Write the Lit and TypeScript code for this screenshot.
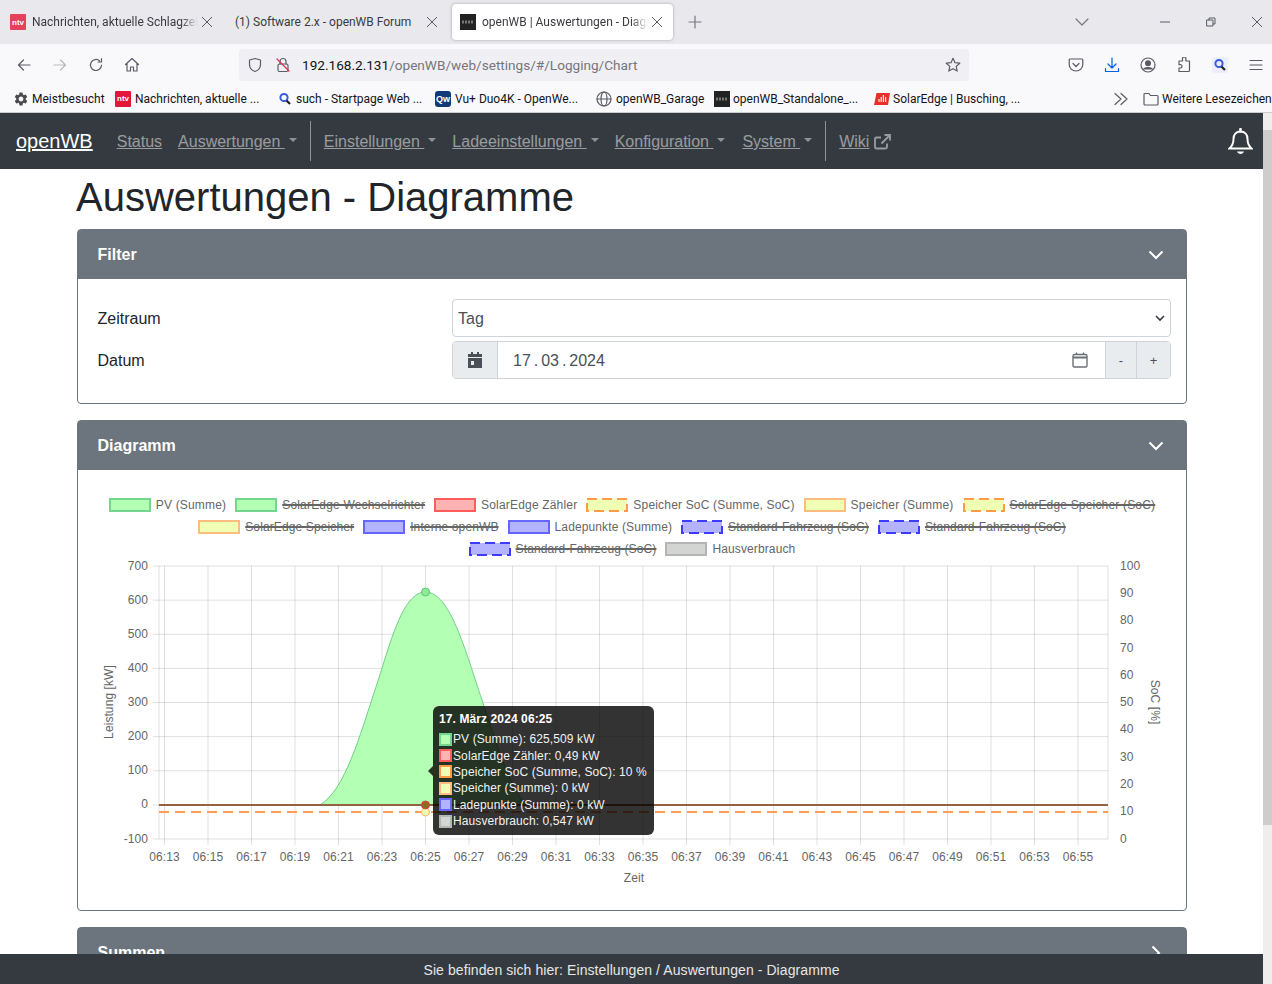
import { LitElement, html, svg, css } from 'lit';
import { customElement } from 'lit/decorators.js';

const GEAR =
  'M19.14 12.94c.04-.3.06-.61.06-.94 0-.32-.02-.64-.07-.94l2.03-1.58c.18-.14.23-.41.12-.61l-1.92-3.32c-.12-.22-.37-.29-.59-.22l-2.39.96c-.5-.38-1.03-.7-1.62-.94l-.36-2.54c-.04-.24-.24-.41-.48-.41h-3.84c-.24 0-.43.17-.47.41l-.36 2.54c-.59.24-1.13.57-1.62.94l-2.39-.96c-.22-.08-.47 0-.59.22L2.74 8.87c-.12.21-.08.47.12.61l2.03 1.58c-.05.3-.09.63-.09.94s.02.64.07.94l-2.03 1.58c-.18.14-.23.41-.12.61l1.92 3.32c.12.22.37.29.59.22l2.39-.96c.5.38 1.03.7 1.62.94l.36 2.54c.05.24.24.41.48.41h3.84c.24 0 .44-.17.47-.41l.36-2.54c.59-.24 1.13-.56 1.62-.94l2.39.96c.22.08.47 0 .59-.22l1.92-3.32c.12-.22.07-.47-.12-.61l-2.01-1.58zM12 15.6c-1.98 0-3.6-1.62-3.6-3.6s1.62-3.6 3.6-3.6 3.6 1.62 3.6 3.6-1.62 3.6-3.6 3.6z';

// toolbar icons, all on a 16 box with a thin stroke
const line = (d: string) => html`<svg class="ic" viewBox="0 0 16 16"><path d=${d} /></svg>`;

const ntv = (cls: string) => html`<span class="fav ${cls}">ntv</span>`;
const wbFav = html`<svg class="fav-svg" viewBox="0 0 16 16">
  <rect width="16" height="16" fill="#222" />
  <path d="M2 8h12" stroke="#777" stroke-width="3" stroke-dasharray="2 1" />
</svg>`;
const searchFav = html`<svg class="fav-svg" viewBox="0 0 16 16">
  <circle cx="7" cy="6.5" r="3.6" fill="none" stroke="#3b5bdb" stroke-width="2" />
  <path d="M9.5 9.5l3.5 3.5" stroke="#222" stroke-width="2.2" />
</svg>`;
const vuFav = html`<span class="fav vu">Qw</span>`;
const globeFav = html`<svg class="ic" viewBox="0 0 16 16">
  <circle cx="8" cy="8" r="7" />
  <ellipse cx="8" cy="8" rx="3" ry="7" />
  <path d="M1 8h14" />
</svg>`;
const solarFav = html`<svg class="fav-svg" viewBox="0 0 16 16">
  <path d="M2.5 2H16l-2 12H0z" fill="#e8302a" />
  <path d="M5 11V8M7.2 11V6M9.4 11V4M11.6 11V6" stroke="#fff" stroke-width="1.1" />
</svg>`;
const gearFav = html`<svg class="fav-svg" viewBox="0 0 24 24"><path d=${GEAR} fill="#4a4a4f" /></svg>`;

const BOOKMARKS = [
  { w: 102, icon: gearFav, text: 'Meistbesucht' },
  { w: 162, icon: ntv('ntv-strong'), text: 'Nachrichten, aktuelle ...' },
  { w: 158, icon: searchFav, text: 'such - Startpage Web ...' },
  { w: 161, icon: vuFav, text: 'Vu+ Duo4K - OpenWe...' },
  { w: 118, icon: globeFav, text: 'openWB_Garage' },
  { w: 160, icon: wbFav, text: 'openWB_Standalone_...' },
  { w: 160, icon: solarFav, text: 'SolarEdge | Busching, ...' },
];

@customElement('browser-chrome')
export class BrowserChrome extends LitElement {
  static override styles = css`
    :host {
      display: block;
      font-family: Roboto, 'Noto Sans', sans-serif;
      font-size: 12px;
      color: #15141a;
    }
    .ic {
      width: 16px;
      height: 16px;
      flex: none;
      fill: none;
      stroke: #5b5b66;
      stroke-width: 1.2;
      stroke-linejoin: round;
      stroke-linecap: round;
    }
    .ic.small {
      width: 10px;
      height: 10px;
      stroke-width: 1;
    }
    .fav-svg {
      width: 16px;
      height: 16px;
      flex: none;
    }
    .fav {
      width: 16px;
      height: 16px;
      flex: none;
      display: flex;
      align-items: center;
      justify-content: center;
      color: #fff;
      font: bold 8px 'Liberation Sans', sans-serif;
      background: #e2173b;
      border-radius: 1px;
    }
    .fav.ntv-soft {
      background: #e5405c;
    }
    .fav.vu {
      background: #123a78;
      border-radius: 3px;
      font-size: 9px;
    }
    .tabs {
      height: 44px;
      background: #e9e9ed;
      display: flex;
      align-items: center;
      padding-left: 2px;
      gap: 4px;
    }
    .tab {
      width: 221px;
      height: 36px;
      box-sizing: border-box;
      display: flex;
      align-items: center;
      gap: 6px;
      padding: 0 11px 0 8px;
      border-radius: 4px;
    }
    .tab .ic.small {
      margin-left: -2px;
    }
    .tab.active {
      background: #fff;
      box-shadow: 0 0 3px rgba(0, 0, 0, 0.3);
    }
    .tab .title {
      flex: 1;
      overflow: hidden;
      white-space: nowrap;
      color: #3a3a40;
    }
    .tab .title.fade {
      -webkit-mask-image: linear-gradient(to right, #000 90%, transparent 100%);
      mask-image: linear-gradient(to right, #000 90%, transparent 100%);
    }
    .plus {
      margin-left: 10px;
      stroke: #77777f;
    }
    .tab-end {
      margin-left: auto;
      display: flex;
      align-items: center;
      padding-right: 10px;
      gap: 36px;
    }
    .tab-end .list {
      margin-right: 34px;
      width: 16px;
      stroke: #77777f;
    }
    .toolbar {
      height: 41px;
      background: #f9f9fb;
      display: flex;
      align-items: center;
      padding-left: 16px;
      gap: 20px;
    }
    .forward {
      stroke: #b9b9bd;
    }
    .url {
      margin-left: 79px;
      margin-right: 79px;
      width: 730px;
      height: 32px;
      box-sizing: border-box;
      background: #f0f0f4;
      border-radius: 4px;
      display: flex;
      align-items: center;
      padding: 0 8px;
      font-size: 13.6px;
    }
    .url .host {
      margin-left: 11px;
    }
    .url .lock {
      margin-left: 12px;
    }
    .url .rest {
      color: #75757c;
    }
    .url .star {
      margin-left: auto;
    }
    .download {
      stroke: #0060df;
    }
    .bookmarks {
      height: 27px;
      background: #f9f9fb;
      border-bottom: 1px solid #ccc;
      box-sizing: content-box;
      display: flex;
      align-items: center;
      padding-left: 13px;
    }
    .bm {
      flex: none;
      box-sizing: border-box;
      display: flex;
      align-items: center;
      gap: 4px;
      white-space: nowrap;
    }
    .bm .fav-svg:first-child {
      margin-right: -1px;
    }
    .bm-end {
      margin-left: 79px;
      flex: none;
      display: flex;
      align-items: center;
      gap: 3px;
      white-space: nowrap;
    }
    .bm-end .more {
      margin-right: 11px;
    }
  `;

  protected override render() {
    return html`
      <div class="tabs">
        <div class="tab">
          ${ntv('ntv-soft')}
          <span class="title fade">Nachrichten, aktuelle Schlagzeilen</span>
          ${this._close()}
        </div>
        <div class="tab">
          <span class="title">(1) Software 2.x - openWB Forum</span>
          ${this._close()}
        </div>
        <div class="tab active">
          ${wbFav}
          <span class="title fade">openWB | Auswertungen - Diagramme</span>
          ${this._close()}
        </div>
        <svg class="ic plus" viewBox="0 0 16 16"><path d="M8 2v12M2 8h12" /></svg>
        <div class="tab-end">
          <svg class="ic list" viewBox="0 0 16 16"><path d="M2 5l6 6 6-6" /></svg>
          <svg class="ic small" viewBox="0 0 10 10"><path d="M0 5h10" /></svg>
          <svg class="ic small" viewBox="0 0 10 10">
            <path d="M1 3h6v6H1zM3 3V1h6v6H7" />
          </svg>
          <svg class="ic small" viewBox="0 0 10 10"><path d="M0 0l10 10M10 0L0 10" /></svg>
        </div>
      </div>
      <div class="toolbar">
        ${line('M14 8H2.5M7.5 3l-5 5 5 5')}
        <svg class="ic forward" viewBox="0 0 16 16"><path d="M2 8h11.5M8.5 3l5 5-5 5" /></svg>
        ${line('M13.5 8a5.5 5.5 0 1 1-1.8-4.1M13.5 1.5V5H10')}
        ${line('M1.5 7.5L8 1.5l6.5 6M3 6.5V14h3.5v-4h3v4H13V6.5')}
        <div class="url">
          ${line('M8 1.5L13.5 3v4.5c0 3.5-2.5 6-5.5 7-3-1-5.5-3.5-5.5-7V3z')}
          <svg class="ic lock" viewBox="0 0 16 16">
            <rect x="3" y="7" width="10" height="7.5" rx="1.5" />
            <path d="M5 7V4.5a3 3 0 0 1 6 0V7" />
            <path d="M2 2l12 12" style="stroke:#e22850" />
          </svg>
          <span class="host">192.168.2.131<span class="rest">/openWB/web/settings/#/Logging/Chart</span></span>
          <svg class="ic star" viewBox="0 0 16 16">
            <path d="M8 1.3l2 4.4 4.8.5-3.6 3.2 1 4.7L8 11.7l-4.2 2.4 1-4.7L1.2 6.2 6 5.7z" />
          </svg>
        </div>
        ${line('M2.2 2h11.6a1 1 0 0 1 1 1v4.6a6.8 6.4 0 0 1-13.6 0V3a1 1 0 0 1 1-1zM5 6.5l3 3 3-3')}
        <svg class="ic download" viewBox="0 0 16 16">
          <path d="M8 1v9.5M4 7l4 4 4-4M1.5 11.5V14.5h13v-3" />
        </svg>
        <svg class="ic" viewBox="0 0 16 16">
          <circle cx="8" cy="8" r="7" />
          <circle cx="8" cy="6.2" r="2.4" fill="#5b5b66" />
          <path d="M3.6 12c1.2-2 7.6-2 8.8 0z" fill="#5b5b66" />
        </svg>
        ${line('M6.5 1.5a1.7 1.7 0 0 1 3.4 0V4h3.6v9.5a1 1 0 0 1-1 1H3V11h1.3a1.7 1.7 0 0 0 0-3.4H3V4h3.5z')}
        <svg class="fav-svg" viewBox="0 0 16 16">
          <rect width="16" height="16" rx="2" fill="#eceeff" />
          <circle cx="7" cy="6.5" r="3.6" fill="none" stroke="#3b5bdb" stroke-width="2" />
          <path d="M9.5 9.5l3.5 3.5" stroke="#222" stroke-width="2.2" />
        </svg>
        ${line('M2 3.5h12M2 8h12M2 12.5h12')}
      </div>
      <div class="bookmarks">
        ${BOOKMARKS.map(
          (b) => html`<div class="bm" style="width:${b.w}px">${b.icon}<span>${b.text}</span></div>`,
        )}
        <div class="bm-end">
          <svg class="ic more" viewBox="0 0 16 16"><path d="M2 2.5L8 8l-6 5.5M8 2.5L14 8l-6 5.5" /></svg>
          ${line('M1 3.5a1 1 0 0 1 1-1h4l1.5 2H14a1 1 0 0 1 1 1v7.5a1 1 0 0 1-1 1H2a1 1 0 0 1-1-1z')}
          <span>Weitere Lesezeichen</span>
        </div>
      </div>
    `;
  }

  private _close() {
    return html`<svg class="ic small" viewBox="0 0 10 10"><path d="M0 0l10 10M10 0L0 10" /></svg>`;
  }
}

type LegendKind = 'pv' | 'red' | 'store' | 'storeDash' | 'blue' | 'blueDash' | 'grey';

const BOX: Record<LegendKind, { fill: string; stroke: string; dash?: string }> = {
  pv: { fill: '#b3ffb3', stroke: '#74d68c' },
  red: { fill: '#ffb3b3', stroke: '#ff5c5c' },
  store: { fill: '#efffb3', stroke: '#ffbc80' },
  storeDash: { fill: '#efffb3', stroke: '#ff9c45', dash: '10 5' },
  blue: { fill: '#b3b3ff', stroke: '#6666ff' },
  blueDash: { fill: '#b3b3ff', stroke: '#3c3cff', dash: '10 5' },
  grey: { fill: '#d3d5d3', stroke: '#b4b6b4' },
};

const LEGEND: { kind: LegendKind; text: string; off?: boolean }[][] = [
  [
    { kind: 'pv', text: 'PV (Summe)' },
    { kind: 'pv', text: 'SolarEdge Wechselrichter', off: true },
    { kind: 'red', text: 'SolarEdge Zähler' },
    { kind: 'storeDash', text: 'Speicher SoC (Summe, SoC)' },
    { kind: 'store', text: 'Speicher (Summe)' },
    { kind: 'storeDash', text: 'SolarEdge Speicher (SoC)', off: true },
  ],
  [
    { kind: 'store', text: 'SolarEdge Speicher', off: true },
    { kind: 'blue', text: 'Interne openWB', off: true },
    { kind: 'blue', text: 'Ladepunkte (Summe)' },
    { kind: 'blueDash', text: 'Standard-Fahrzeug (SoC)', off: true },
    { kind: 'blueDash', text: 'Standard-Fahrzeug (SoC)', off: true },
  ],
  [
    { kind: 'blueDash', text: 'Standard-Fahrzeug (SoC)', off: true },
    { kind: 'grey', text: 'Hausverbrauch' },
  ],
];

const TOOLTIP: { kind: LegendKind; text: string }[] = [
  { kind: 'pv', text: 'PV (Summe): 625,509 kW' },
  { kind: 'red', text: 'SolarEdge Zähler: 0,49 kW' },
  { kind: 'storeDash', text: 'Speicher SoC (Summe, SoC): 10 %' },
  { kind: 'store', text: 'Speicher (Summe): 0 kW' },
  { kind: 'blue', text: 'Ladepunkte (Summe): 0 kW' },
  { kind: 'grey', text: 'Hausverbrauch: 0,547 kW' },
];

// plot geometry, in page coordinates (the svg viewBox matches them)
const PLOT = { left: 159, right: 1108, top: 566, bottom: 839 };
const Y_STEP = (PLOT.bottom - PLOT.top) / 8;
const X0 = 164.5;
const X_STEP = 43.5;
const X_LABELS = Array.from({ length: 22 }, (_, i) => `06:${13 + i * 2}`);
const LEFT_LABELS = [700, 600, 500, 400, 300, 200, 100, 0, -100];
const RIGHT_LABELS = [100, 90, 80, 70, 60, 50, 40, 30, 20, 10, 0];

@customElement('wb-chart')
export class WbChart extends LitElement {
  static override styles = css`
    :host {
      display: block;
      font-family: 'Liberation Sans', Arial, sans-serif;
      font-size: 12px;
      color: #666;
    }
    .legend {
      display: flex;
      flex-direction: column;
    }
    .legend-row {
      height: 22px;
      display: flex;
      justify-content: center;
      align-items: center;
      gap: 9px;
      letter-spacing: 0.12px;
    }
    .legend-row:first-child {
      letter-spacing: 0.18px;
    }
    .item {
      display: flex;
      align-items: center;
      gap: 5px;
      white-space: nowrap;
    }
    .off {
      text-decoration: line-through;
      text-decoration-thickness: 2px;
    }
    .box {
      width: 42px;
      height: 14px;
      flex: none;
    }
    .plot {
      position: relative;
      height: 330px;
    }
    .plot svg {
      display: block;
    }
    .plot text {
      font-family: 'Liberation Sans', Arial, sans-serif;
      font-size: 12px;
      fill: #666;
      letter-spacing: 0.08px;
    }
    .tooltip {
      position: absolute;
      left: 355px;
      top: 146px;
      width: 221px;
      height: 129px;
      box-sizing: border-box;
      padding: 6px;
      border-radius: 6px;
      background: rgba(0, 0, 0, 0.8);
      color: #f2f2f2;
      letter-spacing: 0.1px;
    }
    .tooltip::before {
      content: '';
      position: absolute;
      left: -5px;
      top: 60px;
      border: 5px solid transparent;
      border-left: 0;
      border-right-color: rgba(0, 0, 0, 0.8);
    }
    .tooltip .head {
      font-weight: bold;
      line-height: 14px;
      margin-bottom: 5px;
      color: #fff;
    }
    .tooltip .row {
      display: flex;
      align-items: center;
      height: 16.4px;
      gap: 1px;
      white-space: nowrap;
    }
    .swatch {
      width: 13px;
      height: 13px;
      flex: none;
      box-sizing: border-box;
      border: 2px solid;
    }
  `;

  protected override render() {
    return html`
      <div class="legend">
        ${LEGEND.map(
          (row) => html`<div class="legend-row">
            ${row.map((it) => {
              const b = BOX[it.kind];
              return html`<div class="item">
                <svg class="box" viewBox="0 0 42 14">
                  <rect
                    x="1"
                    y="1"
                    width="40"
                    height="12"
                    fill=${b.fill}
                    stroke=${b.stroke}
                    stroke-width="2"
                    stroke-dasharray=${b.dash ?? 'none'}
                  />
                </svg>
                <span class=${it.off ? 'off' : ''}>${it.text}</span>
              </div>`;
            })}
          </div>`,
        )}
      </div>
      <div class="plot">
        <svg width="1108" height="330" viewBox="78 560 1108 330">${this._plot()}</svg>
        <div class="tooltip">
          <div class="head">17. März 2024 06:25</div>
          ${TOOLTIP.map(
            (r) => html`<div class="row">
              <span
                class="swatch"
                style="background:${BOX[r.kind].fill};border-color:${BOX[r.kind].stroke}"
              ></span>
              <span>${r.text}</span>
            </div>`,
          )}
        </div>
      </div>
    `;
  }

  private _plot() {
    const grid = 'rgba(0,0,0,0.12)';
    return svg`
      ${LEFT_LABELS.map((v, i) => {
        const y = PLOT.top + i * Y_STEP;
        return svg`
          <line x1="153" x2=${PLOT.right} y1=${y} y2=${y} stroke=${grid} />
          <text x="148" y=${y + 3.5} text-anchor="end">${v}</text>`;
      })}
      ${RIGHT_LABELS.map((v, i) => {
        const y = PLOT.top + (i * (PLOT.bottom - PLOT.top)) / 10;
        return svg`<text x="1120" y=${y + 3.6}>${v}</text>`;
      })}
      <line x1=${PLOT.left} x2=${PLOT.left} y1=${PLOT.top} y2=${PLOT.bottom} stroke=${grid} />
      <line x1=${PLOT.right} x2=${PLOT.right} y1=${PLOT.top} y2=${PLOT.bottom} stroke=${grid} />
      ${X_LABELS.map((t, i) => {
        const x = X0 + i * X_STEP;
        return svg`
          <line x1=${x} x2=${x} y1=${PLOT.top} y2="845" stroke=${grid} />
          <text x=${x} y="861" text-anchor="middle">${t}</text>`;
      })}
      <text x="634" y="882" text-anchor="middle">Zeit</text>
      <text transform="translate(113 702) rotate(-90)" text-anchor="middle">Leistung [kW]</text>
      <text transform="translate(1151 702) rotate(90)" text-anchor="middle">SoC [%]</text>

      <path
        d="M320 805C345 790 360 735 375 690C390 645 402 592 425.5 592C450 592 465 650 482 700C497 745 510 790 527 805Z"
        fill="#b3ffb3"
        stroke="#6fd088"
      />
      <line x1=${PLOT.left} x2=${PLOT.right} y1="805" y2="805" stroke="#93623f" stroke-width="2" />
      <line
        x1=${PLOT.left}
        x2=${PLOT.right}
        y1="812"
        y2="812"
        stroke="#ff9c55"
        stroke-width="2"
        stroke-dasharray="10 6"
      />
      <circle cx="425.5" cy="592" r="4" fill="#8fea9c" stroke="#5cc878" />
      <circle cx="425.5" cy="812" r="4" fill="#efffb3" stroke="#ffb45e" />
      <circle cx="425.5" cy="805" r="4" fill="#8c6a28" stroke="#e03c3c" />
    `;
  }
}

@customElement('app-root')
export class AppRoot extends LitElement {
  static override styles = css`
    :host {
      display: flex;
      flex-direction: column;
      height: 984px;
      overflow: hidden;
      position: relative;
      font-family: 'Liberation Sans', Arial, sans-serif;
      font-size: 16px;
      color: #212529;
      background: #fff;
    }
    .window {
      flex: 1;
      display: flex;
      min-height: 0;
    }
    .page {
      flex: 1;
      min-width: 0;
      overflow: hidden;
    }
    .scrollbar {
      width: 9px;
      background: #eee;
    }
    .thumb {
      margin-top: 17px;
      height: 695px;
      background: #cdcdcd;
    }
    nav {
      height: 56px;
      background: #343a40;
      display: flex;
      align-items: center;
      padding: 0 10px 0 16px;
      color: rgba(255, 255, 255, 0.5);
    }
    nav a {
      color: inherit;
      text-decoration: underline;
      white-space: pre;
    }
    .brand {
      color: #fff;
      font-size: 20px;
      margin-right: 24px;
    }
    .link {
      margin: 2px 16px 0 0;
    }
    .drop {
      display: flex;
      align-items: center;
      margin: 2px 16px 0 0;
    }
    .drop::after {
      content: '';
      margin-left: 4px;
      border-top: 4.8px solid;
      border-left: 4.4px solid transparent;
      border-right: 4.4px solid transparent;
      opacity: 0.9;
      position: relative;
      top: -2px;
    }
    .drop.wide {
      margin-right: 17px;
    }
    .drop.tight {
      margin-right: 13px;
    }
    .sep {
      width: 1px;
      height: 40px;
      background: #8f9296;
      margin-right: 13px;
    }
    .wiki {
      display: flex;
      align-items: center;
      gap: 5px;
      margin-top: 2px;
    }
    .wiki svg {
      width: 17px;
      height: 16px;
    }
    .bell {
      margin-left: auto;
      width: 25px;
      height: 27px;
    }
    main {
      width: 1110px;
      margin-left: 77px;
      padding-top: 4px;
    }
    h1 {
      margin: 0 0 8px -1px;
      font-size: 40px;
      font-weight: 400;
      line-height: 48px;
    }
    .card {
      border: 1px solid #6c757d;
      border-radius: 4px;
      margin-bottom: 16px;
    }
    .card-head {
      height: 49px;
      background: #6c757d;
      color: #fff;
      font-weight: bold;
      display: flex;
      align-items: center;
      justify-content: space-between;
      padding: 0 22px 0 19.5px;
    }
    .card-head svg {
      width: 16px;
      height: 16px;
      fill: none;
      stroke: #fff;
      stroke-width: 2;
    }
    .filter-body {
      padding: 20px 15px 24px 19.5px;
      display: grid;
      grid-template-columns: 354.5px 1fr;
      row-gap: 4px;
      align-items: center;
    }
    .filter-body > span {
      padding-top: 2px;
    }
    .control {
      height: 38px;
      box-sizing: border-box;
      border: 1px solid #ced4da;
      border-radius: 4px;
      display: flex;
      align-items: center;
      color: #495057;
    }
    .select {
      justify-content: space-between;
      padding: 0 5px;
    }
    .select span {
      padding-top: 2px;
    }
    .select svg {
      width: 10px;
      height: 10px;
      fill: none;
      stroke: #343a40;
      stroke-width: 1.6;
    }
    .addon {
      height: 100%;
      background: #e9ecef;
      display: flex;
      align-items: center;
      justify-content: center;
      flex: none;
      box-sizing: border-box;
    }
    .addon.cal {
      width: 45px;
      border-right: 1px solid #ced4da;
    }
    .addon.cal svg {
      width: 14px;
      height: 16px;
    }
    .date-text {
      flex: 1;
      padding: 2px 0 0 15px;
      white-space: pre;
      word-spacing: -1.5px;
    }
    .date-icon {
      width: 16px;
      height: 16px;
      margin-right: 17px;
      fill: none;
      stroke: #6b7075;
      stroke-width: 1.4;
    }
    .addon.step {
      width: 31px;
      border-left: 1px solid #ced4da;
      font-size: 13px;
    }
    .addon.step.last {
      width: 34px;
    }
    .diagram-body {
      padding: 24px 0 20px;
    }
    .summen {
      height: 49px;
    }
    footer {
      position: absolute;
      left: 0;
      right: 9px;
      bottom: 0;
      height: 30px;
      box-sizing: border-box;
      padding-top: 2px;
      background: #343a40;
      color: #e6e6e6;
      font-size: 14px;
      letter-spacing: 0.08px;
      display: flex;
      align-items: center;
      justify-content: center;
    }
  `;

  protected override render() {
    const chevDown = html`<svg viewBox="0 0 16 16"><path d="M1.5 4.5L8 11l6.5-6.5" /></svg>`;
    return html`
      <browser-chrome></browser-chrome>
      <div class="window">
        <div class="page">
          <nav>
            <a class="brand">openWB</a>
            <a class="link">Status</a>
            <div class="drop tight"><a>Auswertungen </a></div>
            <div class="sep"></div>
            <div class="drop"><a>Einstellungen </a></div>
            <div class="drop"><a>Ladeeinstellungen </a></div>
            <div class="drop wide"><a>Konfiguration </a></div>
            <div class="drop tight"><a>System </a></div>
            <div class="sep"></div>
            <div class="wiki">
              <a>Wiki</a>
              <svg viewBox="0 0 17 16" fill="none" stroke="currentColor" stroke-width="1.8">
                <path d="M13 9.5V13a1.5 1.5 0 0 1-1.5 1.5h-9A1.5 1.5 0 0 1 1 13V5a1.5 1.5 0 0 1 1.5-1.5H7" />
                <path d="M10.5 1H16v5.5M16 1L7.5 9.5" />
              </svg>
            </div>
            <svg class="bell" viewBox="0 0 25 27" fill="none" stroke="#fff" stroke-width="2">
              <path d="M12.5 3.5c-4.5 0-7 3.2-7 7.5 0 4.5-1.2 6.8-4 9.5h22c-2.8-2.7-4-5-4-9.5 0-4.3-2.5-7.5-7-7.5z" />
              <path d="M12.5 1v2.5" stroke-width="2.6" stroke-linecap="round" />
              <path d="M9 23.5h7c-.6 1.6-1.9 2.5-3.5 2.5S9.6 25.1 9 23.5z" fill="#fff" stroke="none" />
            </svg>
          </nav>
          <main>
            <h1>Auswertungen - Diagramme</h1>
            <section class="card">
              <div class="card-head"><span>Filter</span>${chevDown}</div>
              <div class="filter-body">
                <span>Zeitraum</span>
                <div class="control select">
                  <span>Tag</span>
                  <svg viewBox="0 0 10 10"><path d="M1 3l4 4 4-4" /></svg>
                </div>
                <span>Datum</span>
                <div class="control">
                  <div class="addon cal">
                    <svg viewBox="0 0 14 16" fill="#495057">
                      <path d="M3 0h2v2h4V0h2v2h3v3H0V2h3zM0 6h14v10H0zM3 9v4h3V9z" fill-rule="evenodd" />
                    </svg>
                  </div>
                  <span class="date-text">17 . 03 . 2024</span>
                  <svg class="date-icon" viewBox="0 0 16 16">
                    <rect x="1" y="2.5" width="14" height="12.5" rx="1.5" />
                    <path d="M1 5.5h14" stroke-width="2" />
                    <path d="M4.5 0.5v2M11.5 0.5v2" />
                  </svg>
                  <div class="addon step">-</div>
                  <div class="addon step last">+</div>
                </div>
              </div>
            </section>
            <section class="card">
              <div class="card-head"><span>Diagramm</span>${chevDown}</div>
              <div class="diagram-body"><wb-chart></wb-chart></div>
            </section>
            <section class="card">
              <div class="card-head summen">
                <span>Summen</span>
                <svg viewBox="0 0 16 16"><path d="M4.5 1.5L11 8l-6.5 6.5" /></svg>
              </div>
            </section>
          </main>
        </div>
        <div class="scrollbar"><div class="thumb"></div></div>
      </div>
      <footer>Sie befinden sich hier: Einstellungen / Auswertungen - Diagramme</footer>
    `;
  }
}
